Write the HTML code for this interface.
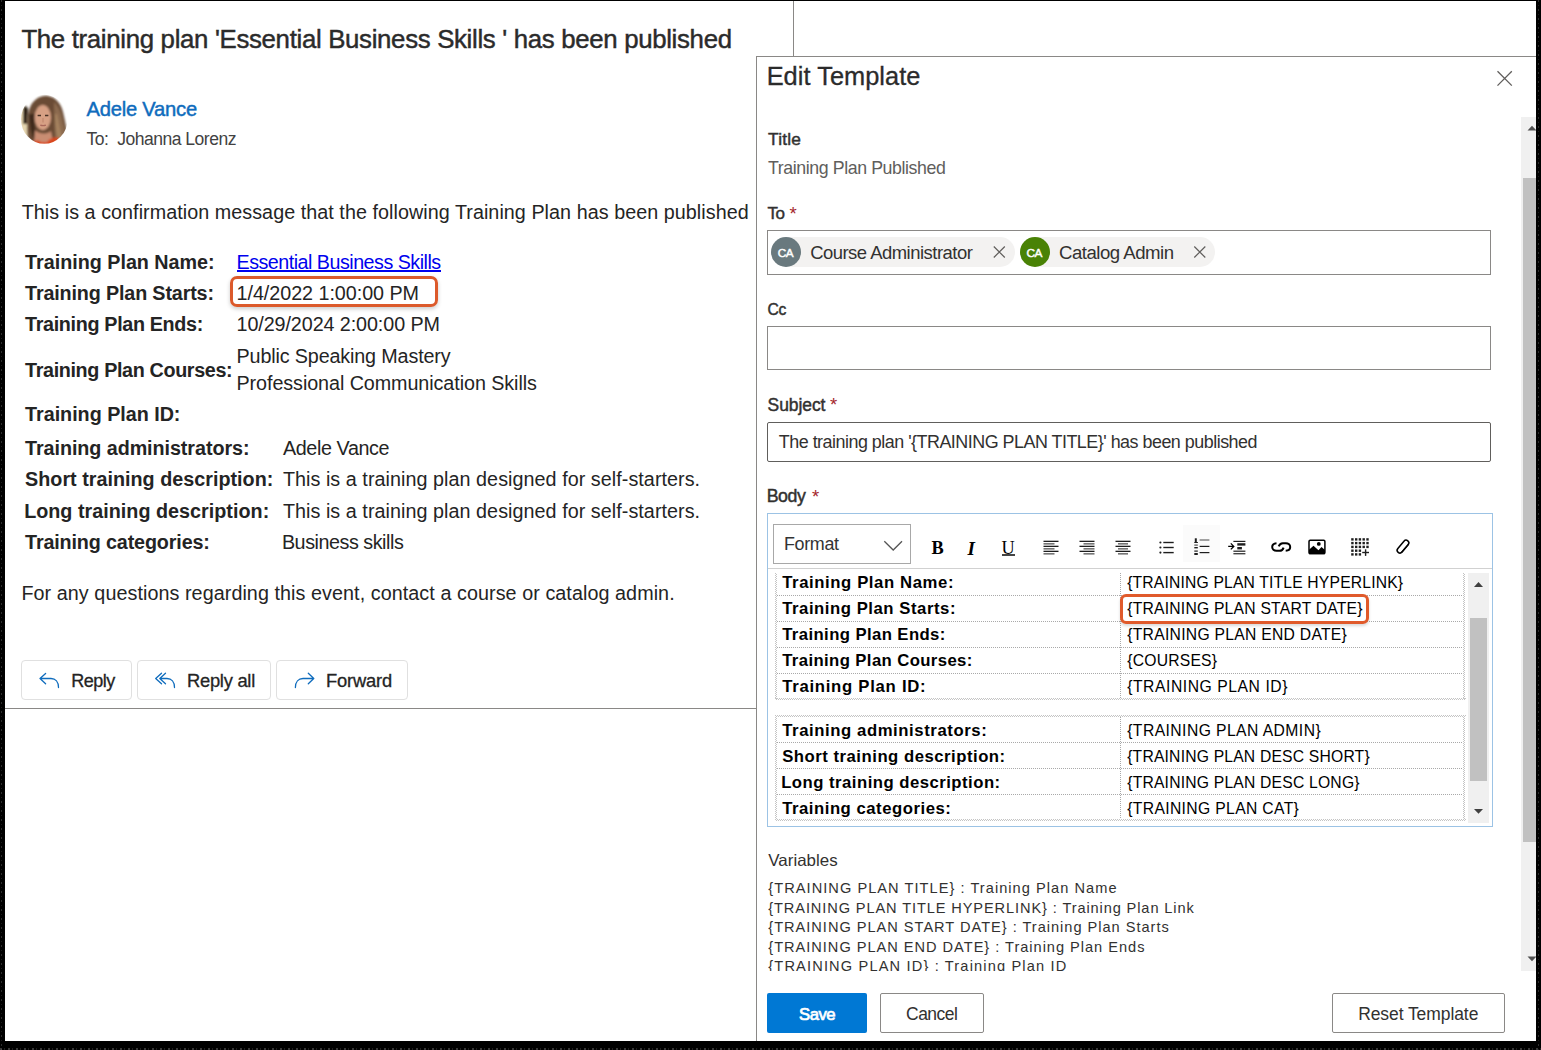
<!DOCTYPE html>
<html>
<head>
<meta charset="utf-8">
<title>Edit Template</title>
<style>
html,body{margin:0;padding:0;}
body{width:1541px;height:1050px;background:#000;position:relative;overflow:hidden;font-family:"Liberation Sans",sans-serif;}
#page{position:absolute;left:5px;top:1px;width:1531px;height:1040px;background:#fff;overflow:hidden;}
.a{position:absolute;box-sizing:border-box;}
.t{position:absolute;white-space:nowrap;line-height:1;font-family:"Liberation Sans",sans-serif;}
#abs{position:absolute;left:-5px;top:-1px;width:1541px;height:1050px;}
</style>
</head>
<body>
<div style="position:absolute;left:1px;top:0;width:1px;height:1050px;background:repeating-linear-gradient(180deg,rgba(255,255,255,0.18) 0 2px,transparent 2px 5px,rgba(255,255,255,0.1) 5px 6px,transparent 6px 9px)"></div>
<div style="position:absolute;left:1538px;top:0;width:1px;height:1050px;background:repeating-linear-gradient(180deg,rgba(255,255,255,0.18) 0 2px,transparent 2px 5px,rgba(255,255,255,0.1) 5px 6px,transparent 6px 9px)"></div>
<div style="position:absolute;left:0;top:1048px;width:1541px;height:2px;background:repeating-linear-gradient(90deg,rgba(255,255,255,0.22) 0 2px,transparent 2px 4px,rgba(255,255,255,0.12) 4px 5px,transparent 5px 8px)"></div>
<div id="page"><div id="abs">
<!-- left email frame lines -->
<div class="a" style="left:793px;top:0;width:1px;height:57px;background:#8a8886"></div>
<div class="a" style="left:5px;top:708px;width:752px;height:1px;background:#8a8886"></div>

<!-- avatar -->
<svg class="a" style="left:20px;top:94px" width="49" height="51" viewBox="0 0 49 51">
  <defs>
    <clipPath id="avc"><ellipse cx="24.3" cy="25.3" rx="23.3" ry="24.5"/></clipPath>
    <filter id="avb" x="-20%" y="-20%" width="140%" height="140%"><feGaussianBlur stdDeviation="0.8"/></filter>
    <filter id="avb2" x="-20%" y="-20%" width="140%" height="140%"><feGaussianBlur stdDeviation="0.45"/></filter>
  </defs>
  <g clip-path="url(#avc)">
    <rect width="49" height="51" fill="#ffffff"/>
    <g filter="url(#avb)">
      <path d="M0 14 L7 12 L9 42 L0 46 Z" fill="#e6d6b0"/>
      <path d="M3 14 C5 11 8 12 8 16 L7 30 L3 30 Z" fill="#2e2218"/>
      <path d="M9 50 C6 40 7 24 9 16 C12 6 20 1 28 2 C36 3 41 10 43 18 C45 26 46 34 48 40 L46 51 L10 51 Z" fill="#6b4c35"/>
      <path d="M34 8 C41 14 42 24 44 32 C46 38 47 43 44 48 L35 46 Z" fill="#8c6b4f"/>
      <path d="M9 20 C9 30 11 40 15 49 L19 47 C15 38 14 28 15 20 Z" fill="#3f2c1f"/>
      <path d="M37 20 C39 28 40 36 42 44 L38 45 C36 38 35 28 35 20 Z" fill="#a5825f"/>
      <ellipse cx="22.8" cy="23.5" rx="8.2" ry="12.5" fill="#d7a084"/>
      <path d="M15 36 C18 40 26 41 31 37 L33 48 L14 48 Z" fill="#c98d72"/>
      <path d="M10 51 C13 47 17 45 21 48 L27 48 C31 43 37 42 42 46 L44 51 Z" fill="#d9461a"/>
    </g>
    <g filter="url(#avb2)">
      <path d="M17.6 21.5 h3.4 M25 21.5 h3.4" stroke="#4a3328" stroke-width="1.3"/>
      <path d="M20.3 31.2 q2.8 1 5.6 0" stroke="#a8675a" stroke-width="1.3" fill="none"/>
      <path d="M23 24 v4.5" stroke="#b98068" stroke-width="0.9"/>
    </g>
  </g>
</svg>

<!-- reply buttons -->
<div class="a" style="left:21px;top:660px;width:111px;height:40px;border:1px solid #e0e0e0;border-radius:4px"></div>
<div class="a" style="left:137px;top:660px;width:134px;height:40px;border:1px solid #e0e0e0;border-radius:4px"></div>
<div class="a" style="left:276px;top:660px;width:132px;height:40px;border:1px solid #e0e0e0;border-radius:4px"></div>
<svg class="a" style="left:0;top:0;overflow:visible" width="1" height="1">
  <g fill="none" stroke="#0f6cbd" stroke-width="1.3" stroke-linecap="round" stroke-linejoin="round">
    <path d="M45.6 673.4 L40 678.5 L45.6 683.7 M40 678.5 H51 C55.5 678.5 58.5 682 58.5 687.5"/>
    <path d="M161.5 673.3 L155.7 678.5 L161.5 683.8 M165.5 673.3 L159.8 678.5 L165.5 683.8 M159.8 678.5 H167 C171.5 678.5 174.5 682 174.5 687.5"/>
    <path d="M308.3 673.2 L313.8 678.5 L308.3 683.8 M313.8 678.5 H303 C298.5 678.5 295.4 682 295.4 687.5"/>
  </g>
</svg>

<!-- red highlight box email -->
<div class="a" style="left:229.5px;top:276px;width:208px;height:31px;border:3px solid #dc5a2b;border-radius:7px;box-shadow:0 2px 4px rgba(0,0,0,0.2)"></div>

<!-- RIGHT PANEL -->
<div class="a" style="left:756px;top:56px;width:800px;height:1000px;background:#fff;border-left:1px solid #8a8886;border-top:1px solid #8a8886"></div>
<!-- close X -->
<svg class="a" style="left:0;top:0;overflow:visible" width="1" height="1">
  <path d="M1497.5 71.3 L1511.8 85.6 M1511.8 71.3 L1497.5 85.6" stroke="#605e5c" stroke-width="1.3" fill="none"/>
</svg>
<!-- outer scrollbar -->
<div class="a" style="left:1521px;top:117px;width:15px;height:854px;background:#f0f0f0"></div>
<div class="a" style="left:1523px;top:178px;width:13px;height:664px;background:#c1c1c1"></div>
<svg class="a" style="left:0;top:0;overflow:visible" width="1" height="1">
  <path d="M1527.5 130.5 L1532 125.8 L1536.5 130.5 Z" fill="#505050"/>
  <path d="M1527.5 956.5 L1532 961.2 L1536.5 956.5 Z" fill="#505050"/>
</svg>

<!-- To box -->
<div class="a" style="left:767px;top:230px;width:724px;height:45px;border:1px solid #8a8886"></div>
<div class="a" style="left:771px;top:237px;width:244px;height:30px;border-radius:15px;background:#f3f2f1"></div>
<div class="a" style="left:771px;top:237px;width:30px;height:30px;border-radius:15px;background:#69797e"></div>
<div class="a" style="left:1020px;top:237px;width:195px;height:30px;border-radius:15px;background:#f3f2f1"></div>
<div class="a" style="left:1020px;top:237px;width:30px;height:30px;border-radius:15px;background:#498205"></div>
<svg class="a" style="left:0;top:0;overflow:visible" width="1" height="1">
  <path d="M993.8 246.5 L1004.8 257.5 M1004.8 246.5 L993.8 257.5" stroke="#605e5c" stroke-width="1.2" fill="none"/>
  <path d="M1194.3 246.5 L1205.3 257.5 M1205.3 246.5 L1194.3 257.5" stroke="#605e5c" stroke-width="1.2" fill="none"/>
</svg>

<!-- Cc box -->
<div class="a" style="left:767px;top:326px;width:724px;height:44px;border:1px solid #8a8886"></div>
<!-- Subject box -->
<div class="a" style="left:767px;top:422px;width:724px;height:40px;border:1px solid #605e5c;border-radius:2px"></div>

<!-- Editor -->
<div class="a" style="left:767px;top:513px;width:726px;height:314px;border:1px solid #9cc3e5"></div>
<div class="a" style="left:773px;top:524px;width:138px;height:40px;border:1px solid #a8a8a8"></div>
<svg class="a" style="left:0;top:0;overflow:visible" width="1" height="1">
  <path d="M884.3 541.3 L893.2 550 L902 541.3" stroke="#555" stroke-width="1.3" fill="none"/>
</svg>
<div class="a" style="left:768px;top:568px;width:724px;height:1px;background:#d1d1d1"></div>
<div class="a" style="left:1183px;top:525px;width:37px;height:37px;background:#fbfbfb"></div>
<!-- B I U -->
<div class="t" style="left:931.5px;top:539px;font:700 18.3px 'Liberation Serif';line-height:1;color:#000">B</div>
<div class="t" style="left:967.5px;top:539px;font:italic 700 19px 'Liberation Serif';line-height:1;color:#000">I</div>
<div class="t" style="left:1001.5px;top:539px;font:400 18.3px 'Liberation Serif';line-height:1;color:#000">U</div>
<div class="a" style="left:1002px;top:554.3px;width:13px;height:1.5px;background:#444"></div>
<svg class="a" style="left:0;top:0;overflow:visible" width="1" height="1">
  <g fill="#1e1e1e">
    <!-- align left -->
    <rect x="1043.5" y="540.7" width="15" height="1.3"/><rect x="1043.5" y="543.2" width="11" height="1.3" fill="#555"/>
    <rect x="1043.5" y="545.7" width="15" height="1.3"/><rect x="1043.5" y="548.2" width="11" height="1.3" fill="#555"/>
    <rect x="1043.5" y="550.7" width="15" height="1.3"/><rect x="1043.5" y="553.2" width="11" height="1.3" fill="#555"/>
    <!-- align right -->
    <rect x="1079.5" y="540.7" width="15" height="1.3"/><rect x="1083.5" y="543.2" width="11" height="1.3" fill="#555"/>
    <rect x="1079.5" y="545.7" width="15" height="1.3"/><rect x="1083.5" y="548.2" width="11" height="1.3" fill="#555"/>
    <rect x="1079.5" y="550.7" width="15" height="1.3"/><rect x="1083.5" y="553.2" width="11" height="1.3" fill="#555"/>
    <!-- align center -->
    <rect x="1115.5" y="540.7" width="15" height="1.3"/><rect x="1118" y="543.2" width="10" height="1.3" fill="#555"/>
    <rect x="1115.5" y="545.7" width="15" height="1.3"/><rect x="1118" y="548.2" width="10" height="1.3" fill="#555"/>
    <rect x="1115.5" y="550.7" width="15" height="1.3"/><rect x="1118" y="553.2" width="10" height="1.3" fill="#555"/>
    <!-- bullets -->
    <circle cx="1160.4" cy="542.5" r="1.1"/><circle cx="1160.4" cy="547.5" r="1.1"/><circle cx="1160.4" cy="552.6" r="1.1"/>
    <rect x="1163.3" y="541.8" width="10.4" height="1.4"/><rect x="1163.3" y="546.8" width="10.4" height="1.4"/><rect x="1163.3" y="551.9" width="10.4" height="1.4"/>
    <!-- numbered -->
    <rect x="1199.6" y="539.4" width="9.8" height="1.2" fill="#666"/><rect x="1199.6" y="545.8" width="9.8" height="1.2"/><rect x="1199.6" y="552" width="9.8" height="1.2"/>
    <rect x="1194.8" y="538.3" width="2" height="4.2"/><rect x="1194.3" y="542" width="3.6" height="1"/>
    <rect x="1194.3" y="544.5" width="3.5" height="1.2" fill="#555"/><rect x="1194.3" y="547" width="3.5" height="1.4"/>
    <rect x="1194.3" y="550.5" width="3.5" height="1.2"/><rect x="1194.3" y="553" width="3.5" height="2"/>
    <!-- indent -->
    <rect x="1233.4" y="540.8" width="12" height="1.2"/><rect x="1237.3" y="543.2" width="8.1" height="2.4"/>
    <rect x="1237.3" y="547" width="4.6" height="2.4"/><rect x="1233.4" y="550.6" width="12" height="1.2"/><rect x="1233.4" y="553" width="12" height="1.4" fill="#444"/>
    <!-- table icon dots -->
    <g>
      <rect x="1351.2" y="538.2" width="2.4" height="2.4"/><rect x="1355" y="538.2" width="2.4" height="2.4"/><rect x="1358.7" y="538.2" width="2.4" height="2.4"/><rect x="1362.5" y="538.2" width="2.4" height="2.4"/><rect x="1366.3" y="538.2" width="2.4" height="2.4"/>
      <rect x="1351.2" y="541.9" width="2.4" height="2.4"/><rect x="1355" y="541.9" width="2.4" height="2.4"/><rect x="1358.7" y="541.9" width="2.4" height="2.4"/><rect x="1362.5" y="541.9" width="2.4" height="2.4"/><rect x="1366.3" y="541.9" width="2.4" height="2.4"/>
      <rect x="1351.2" y="545.7" width="2.4" height="2.4"/><rect x="1355" y="545.7" width="2.4" height="2.4"/><rect x="1358.7" y="545.7" width="2.4" height="2.4"/><rect x="1362.5" y="545.7" width="2.4" height="2.4"/><rect x="1366.3" y="545.7" width="2.4" height="2.4"/>
      <rect x="1351.2" y="549.5" width="2.4" height="2.4"/><rect x="1355" y="549.5" width="2.4" height="2.4"/><rect x="1358.7" y="549.5" width="2.4" height="2.4"/>
      <rect x="1351.2" y="553.2" width="2.4" height="2.4"/><rect x="1355" y="553.2" width="2.4" height="2.4"/><rect x="1358.7" y="553.2" width="2.4" height="2.4"/>
      <rect x="1362.2" y="551.8" width="6.8" height="1.4"/><rect x="1364.9" y="549.3" width="1.4" height="6.6"/>
    </g>
  </g>
  <g fill="none" stroke="#000">
    <path d="M1228.2 546.4 H1233.6 M1230.8 543.4 L1233.8 546.4 L1230.8 549.4" stroke-width="1.3"/>
  </g>
</svg>
<!-- link, image, eraser -->
<svg class="a" style="left:0;top:0;overflow:visible" width="1" height="1">
  <g fill="none" stroke="#000" stroke-width="2" stroke-linecap="butt">
    <path d="M1276.5 543.2 C1273.5 543.4 1272.2 545.3 1272.2 547 C1272.2 549 1274 550.8 1276.5 550.8 H1279.5 C1281.6 550.8 1283 549.3 1283.6 547.6"/>
    <path d="M1285.7 550.8 C1288.7 550.6 1290.2 548.7 1290.2 547 C1290.2 545 1288.4 543.2 1285.9 543.2 H1282.8 C1280.7 543.2 1279.3 544.7 1278.7 546.4"/>
  </g>
  <rect x="1309" y="540.3" width="15.9" height="13.3" rx="1.2" fill="none" stroke="#000" stroke-width="1.5"/>
  <circle cx="1318.8" cy="543.9" r="1.9" fill="#000"/>
  <path d="M1309 549.8 L1313.5 545.8 L1318.5 550.2 L1321.5 547 L1325 550 V554.3 H1309 Z" fill="#000"/>
  <g transform="translate(1403 546.6) rotate(-50)">
    <rect x="-7.5" y="-2.75" width="15" height="5.5" rx="2.75" fill="none" stroke="#000" stroke-width="1.5"/>
    <path d="M-5.5 2.6 H5.5" stroke="#000" stroke-width="1.3"/>
  </g>
</svg>

<!-- editor tables (dotted) -->
<div class="a" style="left:775px;top:573px;width:2px;height:126px;background:repeating-linear-gradient(180deg,#c4c4c4 0 1px,transparent 1px 2px),repeating-linear-gradient(180deg,transparent 0 1px,#c4c4c4 1px 2px);background-size:1px 100%,1px 100%;background-position:0 0,1px 0;background-repeat:no-repeat"></div>
<div class="a" style="left:1463px;top:573px;width:2px;height:126px;background:repeating-linear-gradient(180deg,#c4c4c4 0 1px,transparent 1px 2px),repeating-linear-gradient(180deg,transparent 0 1px,#c4c4c4 1px 2px);background-size:1px 100%,1px 100%;background-position:0 0,1px 0;background-repeat:no-repeat"></div>
<div class="a" style="left:775px;top:698px;width:691px;height:2px;background:repeating-linear-gradient(90deg,#c4c4c4 0 1px,transparent 1px 2px),repeating-linear-gradient(90deg,transparent 0 1px,#c4c4c4 1px 2px);background-size:100% 1px,100% 1px;background-position:0 0,0 1px;background-repeat:no-repeat"></div>
<div class="a" style="left:1120px;top:573px;width:1px;height:125px;background:repeating-linear-gradient(180deg,#a9a9a9 0 1px,transparent 1px 2px)"></div>
<div class="a" style="left:777px;top:595px;width:686px;height:1px;background:repeating-linear-gradient(90deg,#a9a9a9 0 1px,transparent 1px 2px)"></div>
<div class="a" style="left:777px;top:621px;width:686px;height:1px;background:repeating-linear-gradient(90deg,#a9a9a9 0 1px,transparent 1px 2px)"></div>
<div class="a" style="left:777px;top:647px;width:686px;height:1px;background:repeating-linear-gradient(90deg,#a9a9a9 0 1px,transparent 1px 2px)"></div>
<div class="a" style="left:777px;top:673px;width:686px;height:1px;background:repeating-linear-gradient(90deg,#a9a9a9 0 1px,transparent 1px 2px)"></div>
<div class="a" style="left:775px;top:715px;width:691px;height:2px;background:repeating-linear-gradient(90deg,#c4c4c4 0 1px,transparent 1px 2px),repeating-linear-gradient(90deg,transparent 0 1px,#c4c4c4 1px 2px);background-size:100% 1px,100% 1px;background-position:0 0,0 1px;background-repeat:no-repeat"></div>
<div class="a" style="left:775px;top:715px;width:2px;height:106px;background:repeating-linear-gradient(180deg,#c4c4c4 0 1px,transparent 1px 2px),repeating-linear-gradient(180deg,transparent 0 1px,#c4c4c4 1px 2px);background-size:1px 100%,1px 100%;background-position:0 0,1px 0;background-repeat:no-repeat"></div>
<div class="a" style="left:1463px;top:715px;width:2px;height:106px;background:repeating-linear-gradient(180deg,#c4c4c4 0 1px,transparent 1px 2px),repeating-linear-gradient(180deg,transparent 0 1px,#c4c4c4 1px 2px);background-size:1px 100%,1px 100%;background-position:0 0,1px 0;background-repeat:no-repeat"></div>
<div class="a" style="left:775px;top:819px;width:691px;height:2px;background:repeating-linear-gradient(90deg,#c4c4c4 0 1px,transparent 1px 2px),repeating-linear-gradient(90deg,transparent 0 1px,#c4c4c4 1px 2px);background-size:100% 1px,100% 1px;background-position:0 0,0 1px;background-repeat:no-repeat"></div>
<div class="a" style="left:1120px;top:717px;width:1px;height:102px;background:repeating-linear-gradient(180deg,#a9a9a9 0 1px,transparent 1px 2px)"></div>
<div class="a" style="left:777px;top:742px;width:686px;height:1px;background:repeating-linear-gradient(90deg,#a9a9a9 0 1px,transparent 1px 2px)"></div>
<div class="a" style="left:777px;top:768px;width:686px;height:1px;background:repeating-linear-gradient(90deg,#a9a9a9 0 1px,transparent 1px 2px)"></div>
<div class="a" style="left:777px;top:794px;width:686px;height:1px;background:repeating-linear-gradient(90deg,#a9a9a9 0 1px,transparent 1px 2px)"></div>
<!-- red box editor -->
<div class="a" style="left:1120px;top:594px;width:249px;height:30px;border:3px solid #e05a2b;border-radius:6px;box-shadow:0 2px 3px rgba(0,0,0,0.15)"></div>
<!-- inner scrollbar -->
<div class="a" style="left:1468px;top:573px;width:21px;height:250px;background:#f0f0f0"></div>
<div class="a" style="left:1470px;top:618px;width:17px;height:163px;background:#c1c1c1"></div>
<svg class="a" style="left:0;top:0;overflow:visible" width="1" height="1">
  <path d="M1474 587 L1478.5 582 L1483 587 Z" fill="#404040"/>
  <path d="M1474 809 L1478.5 813.8 L1483 809 Z" fill="#404040"/>
</svg>

<!-- footer buttons -->
<div class="a" style="left:767px;top:993px;width:100px;height:40px;background:#0078d4;border-radius:2px"></div>
<div class="a" style="left:880px;top:993px;width:104px;height:40px;border:1px solid #8a8886;border-radius:2px"></div>
<div class="a" style="left:1332px;top:993px;width:173px;height:40px;border:1px solid #8a8886;border-radius:2px"></div>
<!-- link underline -->
<div class="a" style="left:237px;top:270px;width:204px;height:1.6px;background:#0000ee"></div>

<div class="t" id="t0" style="left:21.40px;top:27.01px;font-size:25.80px;letter-spacing:-0.321px;font-weight:400;color:#2b2b2b;-webkit-text-stroke:0.45px #2b2b2b;">The training plan 'Essential Business Skills ' has been published</div>
<div class="t" id="t1" style="left:86.60px;top:99.00px;font-size:20.16px;letter-spacing:-0.230px;font-weight:400;color:#0f6cbd;-webkit-text-stroke:0.45px #0f6cbd;">Adele Vance</div>
<div class="t" id="t2" style="left:86.60px;top:131.00px;font-size:17.54px;letter-spacing:-0.500px;font-weight:400;color:#424242;">To:  Johanna Lorenz</div>
<div class="t" id="t3" style="left:21.70px;top:203.00px;font-size:19.74px;letter-spacing:0.050px;font-weight:400;color:#242424;">This is a confirmation message that the following Training Plan has been published</div>
<div class="t" id="t4" style="left:25.10px;top:253.01px;font-size:19.74px;letter-spacing:-0.008px;font-weight:700;color:#242424;">Training Plan Name:</div>
<div class="t" id="t5" style="left:25.10px;top:284.01px;font-size:19.74px;letter-spacing:-0.151px;font-weight:700;color:#242424;">Training Plan Starts:</div>
<div class="t" id="t6" style="left:25.10px;top:315.00px;font-size:19.74px;letter-spacing:-0.336px;font-weight:700;color:#242424;">Training Plan Ends:</div>
<div class="t" id="t7" style="left:25.10px;top:361.01px;font-size:19.74px;letter-spacing:-0.354px;font-weight:700;color:#242424;">Training Plan Courses:</div>
<div class="t" id="t8" style="left:25.10px;top:405.00px;font-size:19.74px;letter-spacing:-0.022px;font-weight:700;color:#242424;">Training Plan ID:</div>
<div class="t" id="t9" style="left:25.10px;top:439.00px;font-size:19.74px;letter-spacing:-0.065px;font-weight:700;color:#242424;">Training administrators:</div>
<div class="t" id="t10" style="left:25.10px;top:470.01px;font-size:19.74px;letter-spacing:0.017px;font-weight:700;color:#242424;">Short training description:</div>
<div class="t" id="t11" style="left:24.13px;top:502.01px;font-size:19.74px;letter-spacing:0.024px;font-weight:700;color:#242424;">Long training description:</div>
<div class="t" id="t12" style="left:25.10px;top:533.00px;font-size:19.74px;letter-spacing:-0.145px;font-weight:700;color:#242424;">Training categories:</div>
<div class="t" id="t13" style="left:236.53px;top:253.00px;font-size:19.71px;letter-spacing:-0.500px;font-weight:400;color:#0000ee;">Essential Business Skills</div>
<div class="t" id="t14" style="left:236.53px;top:284.01px;font-size:19.74px;letter-spacing:-0.039px;font-weight:400;color:#242424;">1/4/2022 1:00:00 PM</div>
<div class="t" id="t15" style="left:236.53px;top:315.00px;font-size:19.74px;letter-spacing:-0.087px;font-weight:400;color:#242424;">10/29/2024 2:00:00 PM</div>
<div class="t" id="t16" style="left:236.53px;top:347.00px;font-size:19.74px;letter-spacing:-0.139px;font-weight:400;color:#242424;">Public Speaking Mastery</div>
<div class="t" id="t17" style="left:236.53px;top:374.01px;font-size:19.74px;letter-spacing:-0.073px;font-weight:400;color:#242424;">Professional Communication Skills</div>
<div class="t" id="t18" style="left:282.90px;top:439.00px;font-size:19.74px;letter-spacing:-0.376px;font-weight:400;color:#242424;">Adele Vance</div>
<div class="t" id="t19" style="left:282.90px;top:470.01px;font-size:19.74px;letter-spacing:0.052px;font-weight:400;color:#242424;">This is a training plan designed for self-starters.</div>
<div class="t" id="t20" style="left:282.90px;top:502.01px;font-size:19.74px;letter-spacing:0.052px;font-weight:400;color:#242424;">This is a training plan designed for self-starters.</div>
<div class="t" id="t21" style="left:281.93px;top:533.00px;font-size:19.74px;letter-spacing:-0.463px;font-weight:400;color:#242424;">Business skills</div>
<div class="t" id="t22" style="left:21.43px;top:584.00px;font-size:19.74px;letter-spacing:0.067px;font-weight:400;color:#242424;">For any questions regarding this event, contact a course or catalog admin.</div>
<div class="t" id="t23" style="left:71.25px;top:672.01px;font-size:18.02px;letter-spacing:-0.500px;font-weight:400;color:#242424;-webkit-text-stroke:0.3px #242424;">Reply</div>
<div class="t" id="t24" style="left:187.03px;top:672.02px;font-size:18.33px;letter-spacing:-0.261px;font-weight:400;color:#242424;-webkit-text-stroke:0.3px #242424;">Reply all</div>
<div class="t" id="t25" style="left:326.03px;top:672.02px;font-size:18.33px;letter-spacing:-0.166px;font-weight:400;color:#242424;-webkit-text-stroke:0.3px #242424;">Forward</div>
<div class="t" id="t26" style="left:766.66px;top:64.01px;font-size:25.38px;letter-spacing:0.038px;font-weight:400;color:#2b2b2b;-webkit-text-stroke:0.3px #2b2b2b;">Edit Template</div>
<div class="t" id="t27" style="left:768.00px;top:131.00px;font-size:17.34px;letter-spacing:0.213px;font-weight:400;color:#323130;-webkit-text-stroke:0.45px #323130;">Title</div>
<div class="t" id="t28" style="left:768.00px;top:160.00px;font-size:17.76px;letter-spacing:-0.407px;font-weight:400;color:#605e5c;">Training Plan Published</div>
<div class="t" id="t29" style="left:767.60px;top:205.00px;font-size:17.05px;letter-spacing:-0.500px;font-weight:400;color:#323130;-webkit-text-stroke:0.45px #323130;">To</div>
<div class="t" id="t30" style="left:767.60px;top:302.02px;font-size:15.66px;letter-spacing:-0.500px;font-weight:400;color:#323130;-webkit-text-stroke:0.45px #323130;">Cc</div>
<div class="t" id="t31" style="left:767.60px;top:397.00px;font-size:17.48px;letter-spacing:-0.064px;font-weight:400;color:#323130;-webkit-text-stroke:0.45px #323130;">Subject</div>
<div class="t" id="t32" style="left:766.63px;top:488.00px;font-size:17.76px;letter-spacing:-0.403px;font-weight:400;color:#323130;-webkit-text-stroke:0.45px #323130;">Body</div>
<div class="t" id="t33" style="left:789.50px;top:205.01px;font-size:18.61px;letter-spacing:0.000px;font-weight:400;color:#a4262c;">*</div>
<div class="t" id="t34" style="left:830.00px;top:396.02px;font-size:18.61px;letter-spacing:0.000px;font-weight:400;color:#a4262c;">*</div>
<div class="t" id="t35" style="left:812.00px;top:488.01px;font-size:18.61px;letter-spacing:0.000px;font-weight:400;color:#a4262c;">*</div>
<div class="t" id="t36" style="left:810.16px;top:244.01px;font-size:18.45px;letter-spacing:-0.500px;font-weight:400;color:#323130;">Course Administrator</div>
<div class="t" id="t37" style="left:1059.05px;top:244.00px;font-size:18.63px;letter-spacing:-0.500px;font-weight:400;color:#323130;">Catalog Admin</div>
<div class="t" id="t38" style="left:777.70px;top:247.01px;font-size:11.73px;letter-spacing:-0.500px;font-weight:400;color:#ffffff;-webkit-text-stroke:0.45px #ffffff;">CA</div>
<div class="t" id="t39" style="left:1026.50px;top:248.01px;font-size:11.84px;letter-spacing:-0.467px;font-weight:400;color:#ffffff;-webkit-text-stroke:0.45px #ffffff;">CA</div>
<div class="t" id="t40" style="left:778.80px;top:434.00px;font-size:17.92px;letter-spacing:-0.500px;font-weight:400;color:#323130;">The training plan '{TRAINING PLAN TITLE}' has been published</div>
<div class="t" id="t41" style="left:784.03px;top:536.01px;font-size:17.91px;letter-spacing:-0.350px;font-weight:400;color:#333333;">Format</div>
<div class="t ed" id="t42" style="left:782.20px;top:575.00px;font-size:16.72px;letter-spacing:0.594px;font-weight:700;color:#000000;">Training Plan Name:</div>
<div class="t ed" id="t43" style="left:782.20px;top:601.00px;font-size:16.72px;letter-spacing:0.542px;font-weight:700;color:#000000;">Training Plan Starts:</div>
<div class="t ed" id="t44" style="left:782.20px;top:627.00px;font-size:16.72px;letter-spacing:0.403px;font-weight:700;color:#000000;">Training Plan Ends:</div>
<div class="t ed" id="t45" style="left:782.20px;top:653.00px;font-size:16.72px;letter-spacing:0.393px;font-weight:700;color:#000000;">Training Plan Courses:</div>
<div class="t ed" id="t46" style="left:782.20px;top:679.00px;font-size:16.72px;letter-spacing:0.730px;font-weight:700;color:#000000;">Training Plan ID:</div>
<div class="t ed" id="t47" style="left:782.20px;top:723.00px;font-size:16.72px;letter-spacing:0.581px;font-weight:700;color:#000000;">Training administrators:</div>
<div class="t ed" id="t48" style="left:782.20px;top:749.00px;font-size:16.72px;letter-spacing:0.509px;font-weight:700;color:#000000;">Short training description:</div>
<div class="t ed" id="t49" style="left:781.20px;top:775.00px;font-size:16.72px;letter-spacing:0.482px;font-weight:700;color:#000000;">Long training description:</div>
<div class="t ed" id="t50" style="left:782.20px;top:801.00px;font-size:16.72px;letter-spacing:0.523px;font-weight:700;color:#000000;">Training categories:</div>
<div class="t ed" id="t51" style="left:1127.20px;top:575.01px;font-size:15.70px;letter-spacing:0.167px;font-weight:400;color:#000000;">{TRAINING PLAN TITLE HYPERLINK}</div>
<div class="t ed" id="t52" style="left:1127.20px;top:601.01px;font-size:15.70px;letter-spacing:0.220px;font-weight:400;color:#000000;">{TRAINING PLAN START DATE}</div>
<div class="t ed" id="t53" style="left:1127.20px;top:627.01px;font-size:15.70px;letter-spacing:0.276px;font-weight:400;color:#000000;">{TRAINING PLAN END DATE}</div>
<div class="t ed" id="t54" style="left:1127.20px;top:653.01px;font-size:15.70px;letter-spacing:0.223px;font-weight:400;color:#000000;">{COURSES}</div>
<div class="t ed" id="t55" style="left:1127.20px;top:679.01px;font-size:15.70px;letter-spacing:0.554px;font-weight:400;color:#000000;">{TRAINING PLAN ID}</div>
<div class="t ed" id="t56" style="left:1127.20px;top:723.01px;font-size:15.70px;letter-spacing:0.433px;font-weight:400;color:#000000;">{TRAINING PLAN ADMIN}</div>
<div class="t ed" id="t57" style="left:1127.20px;top:749.01px;font-size:15.70px;letter-spacing:0.190px;font-weight:400;color:#000000;">{TRAINING PLAN DESC SHORT}</div>
<div class="t ed" id="t58" style="left:1127.20px;top:775.01px;font-size:15.70px;letter-spacing:0.200px;font-weight:400;color:#000000;">{TRAINING PLAN DESC LONG}</div>
<div class="t ed" id="t59" style="left:1127.20px;top:801.01px;font-size:15.70px;letter-spacing:0.350px;font-weight:400;color:#000000;">{TRAINING PLAN CAT}</div>
<div class="t" id="t60" style="left:768.30px;top:853.01px;font-size:16.92px;letter-spacing:0.021px;font-weight:400;color:#323130;">Variables</div>
<div class="t var" id="t61" style="left:768.30px;top:881.00px;font-size:14.60px;letter-spacing:1.043px;font-weight:400;color:#323130;">{TRAINING PLAN TITLE} : Training Plan Name</div>
<div class="t var" id="t62" style="left:768.30px;top:901.00px;font-size:14.60px;letter-spacing:0.889px;font-weight:400;color:#323130;">{TRAINING PLAN TITLE HYPERLINK} : Training Plan Link</div>
<div class="t var" id="t63" style="left:768.30px;top:920.00px;font-size:14.60px;letter-spacing:0.982px;font-weight:400;color:#323130;">{TRAINING PLAN START DATE} : Training Plan Starts</div>
<div class="t var" id="t64" style="left:768.30px;top:940.00px;font-size:14.60px;letter-spacing:0.979px;font-weight:400;color:#323130;">{TRAINING PLAN END DATE} : Training Plan Ends</div>
<div class="t var" id="t65" style="left:768.30px;top:959.00px;font-size:14.60px;letter-spacing:1.158px;font-weight:400;color:#323130;">{TRAINING PLAN ID} : Training Plan ID</div>
<div class="t" id="t66" style="left:799.00px;top:1007.01px;font-size:16.69px;letter-spacing:-0.500px;font-weight:400;color:#ffffff;-webkit-text-stroke:0.7px #ffffff;">Save</div>
<div class="t" id="t67" style="left:906.00px;top:1006.01px;font-size:17.48px;letter-spacing:-0.485px;font-weight:400;color:#323130;">Cancel</div>
<div class="t" id="t68" style="left:1358.13px;top:1006.01px;font-size:17.48px;letter-spacing:-0.063px;font-weight:400;color:#323130;">Reset Template</div>
<div class="a" style="left:757px;top:971px;width:763px;height:21px;background:#fff"></div>
</div></div>
</body>
</html>
